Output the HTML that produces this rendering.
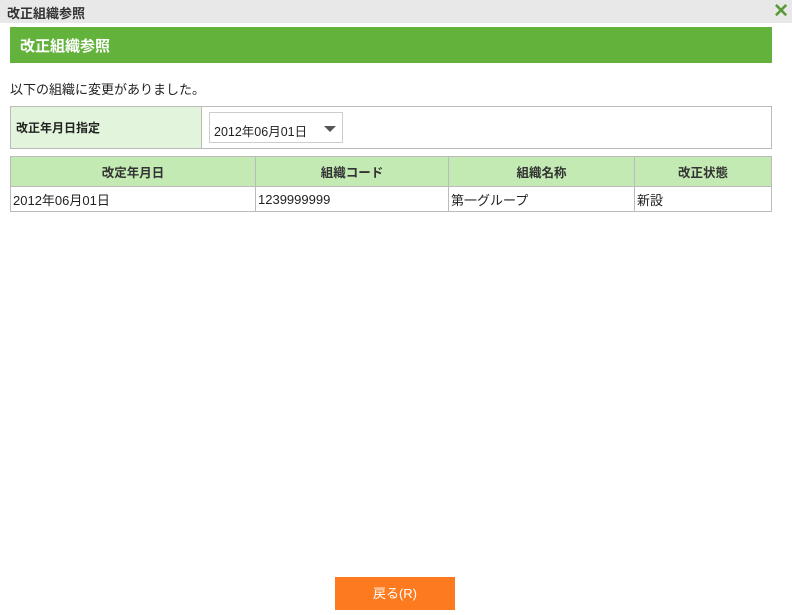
<!DOCTYPE html>
<html><head><meta charset="utf-8"><style>
*{margin:0;padding:0;box-sizing:border-box}
body{width:792px;height:615px;background:#fff;font-family:"Liberation Sans","Noto Sans CJK JP",sans-serif;font-size:13px;color:#222;position:relative;overflow:hidden}
.tb{position:absolute;left:0;top:0;width:792px;height:23px;background:#e8e8e8;font-size:13px;font-weight:bold;color:#333;padding:3px 0 0 7px}
.x{position:absolute;right:3px;top:0px;color:#5a9a3a;font-size:19px;font-weight:bold;line-height:23px}
.gh{position:absolute;left:10px;top:27px;width:762px;height:36px;background:#62b23b;color:#fff;font-size:15px;font-weight:bold;padding:8px 0 0 10px}
.msg{position:absolute;left:10px;top:79px;font-size:13px}
.form{position:absolute;left:10px;top:106px;width:762px;height:43px;border:1px solid #bbb}
.lab{position:absolute;left:0;top:0;width:191px;height:41px;background:#e2f5dc;border-right:1px solid #bbb;font-weight:bold;padding:12px 0 0 5px;font-size:12px}
.sel{position:absolute;left:198px;top:5px;width:134px;height:31px;border:1px solid #ccc;padding:8px 0 0 4px;font-size:12.5px}
.sel:after{content:"";position:absolute;right:6px;top:13px;border:6px solid transparent;border-top:6px solid #555;border-bottom:0}
table{position:absolute;left:10px;top:156px;width:762px;border-collapse:collapse;font-size:13px}
td,th{border:1px solid #bbb;height:26px}
th{background:#c3eab3;font-weight:bold;height:30px;color:#333;font-size:12.5px}
td{padding-left:2px;height:25px}
.btn{position:absolute;left:335px;top:577px;width:120px;height:33px;background:#fd7a1f;color:#fff;text-align:center;line-height:33px;font-size:13px}
</style></head><body>
<div class="tb">改正組織参照</div><div class="x">✕</div>
<div class="gh">改正組織参照</div>
<div class="msg">以下の組織に変更がありました。</div>
<div class="form"><div class="lab">改正年月日指定</div><div class="sel">2012年06月01日</div></div>
<table><tr><th style="width:245px">改定年月日</th><th style="width:193px">組織コード</th><th style="width:186px">組織名称</th><th>改正状態</th></tr>
<tr><td>2012年06月01日</td><td>1239999999</td><td>第一グループ</td><td>新設</td></tr></table>
<div class="btn">戻る(R)</div>
</body></html>
